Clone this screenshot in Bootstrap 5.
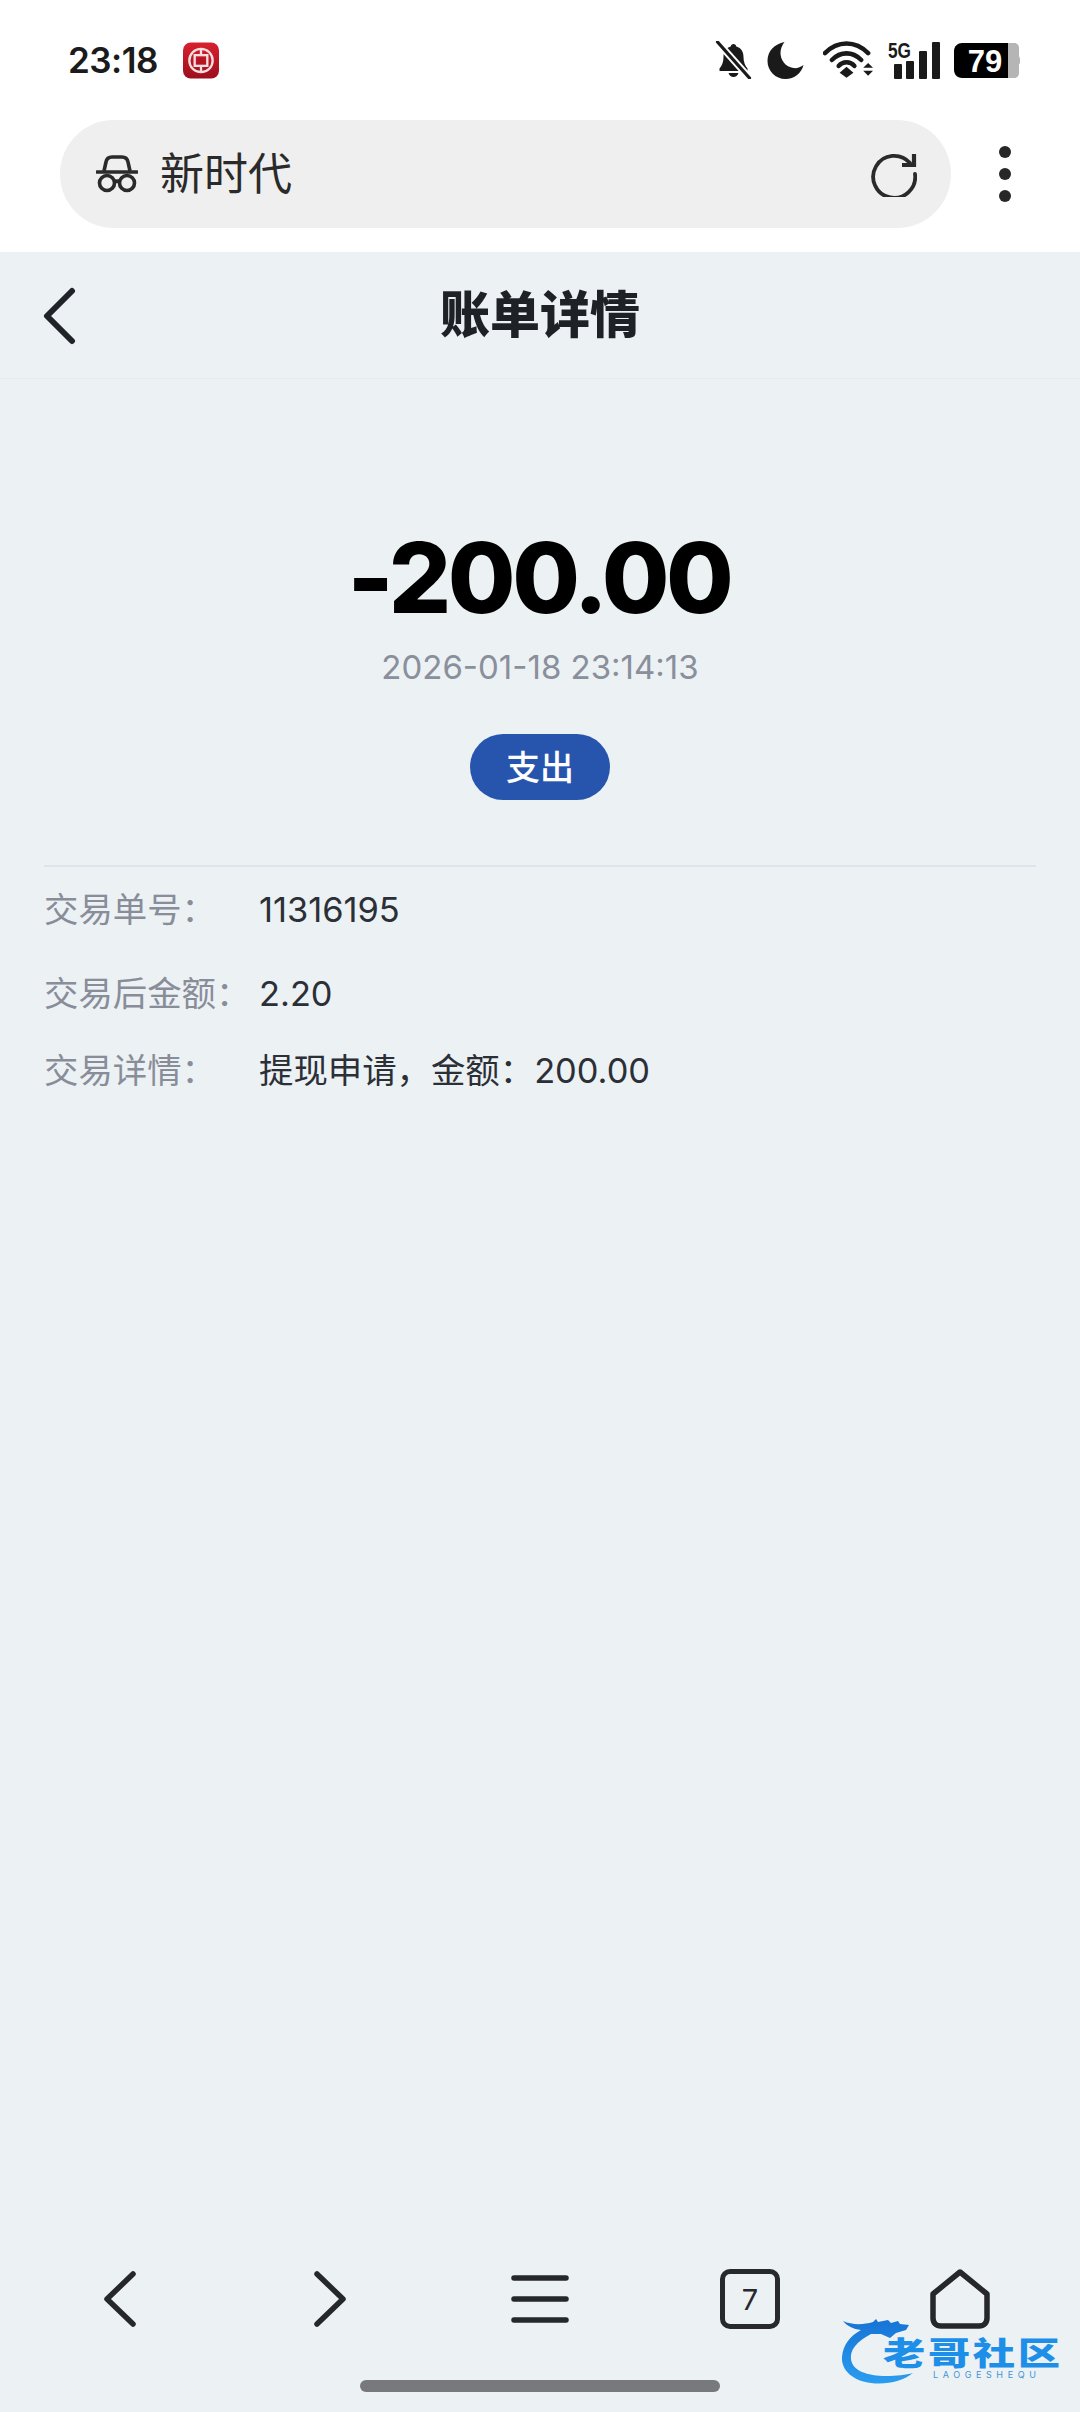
<!DOCTYPE html>
<html lang="zh-CN">
<head>
    <meta charset="UTF-8">
    <meta name="viewport" content="width=device-width, initial-scale=1.0">
    <title>账单详情</title>
    <link rel="stylesheet" href="https://cdn.jsdelivr.net/npm/bootstrap@5.3.0/dist/css/bootstrap.min.css">
    <style>
        body { width: 1080px; height: 2412px; background-color: #ecf1f4; font-family: Inter, "Noto Sans CJK SC", sans-serif; overflow: hidden; }
        .screen { height: 2412px; }
        .top-chrome { background: #fff; height: 252px; }
        .status-row { height: 120px; padding: 0 60px 0 68px; }
        .clock { font-size: 35px; font-weight: 600; color: #1b1b1b; letter-spacing: -0.5px; margin-right: 25px; }
        .status-icons { gap: 14px; }
        .moon-icon { margin-right: 4px; }
        .five-g { overflow: visible; }
        .battery-box { width: 66px; height: 35px; }
        .url-row { height: 108px; padding: 0 0 0 60px; }
        .url-pill { width: 891px; height: 108px; background: #efefef; border-radius: 54px; padding: 0 34px 0 36px; }
        .url-text { font-size: 44px; color: #2a2a2a; margin-left: 22px; line-height: 1; }
        .kebab { gap: 10px; width: 108px; }
        .kebab span { width: 12px; height: 12px; background: #272727; border-radius: 50%; }
        .page-head { height: 127px; border-bottom: 1px solid #e6eaee; }
        .page-title { font-size: 50px; font-weight: 900; color: #1e2227; line-height: 1; }
        .back-btn { left: 40px; top: 35px; }
        .amount-block { padding-top: 150px; }
        .amount { font-size: 98px; font-weight: 800; color: #000; line-height: 1; letter-spacing: -3.4px; margin-right: 2px; }
        .stamp { font-size: 33px; color: #8a8f9c; line-height: 1; margin-top: 24px; }
        .kind-pill { width: 140px; height: 66px; border-radius: 33px; background: #2755ad; color: #fff; font-size: 34px; font-weight: 500; margin-top: 50px; }
        .detail-list { margin: 65px 44px 0; border-top: 2px solid #dfe4ec; padding-top: 22px; }
        .detail-row { font-size: 34.400px; line-height: 42px; color: #2b2f36; }
        .detail-row + .detail-row { margin-top: 42px; }
        .detail-row.tight { margin-top: 35px; }
        .detail-key { width: 215px; color: #888d99; flex: none; }
        .bottom-bar { height: 126px; padding: 0 15px; margin-bottom: 18px; }
        .nav-slot { flex: 1; }
        .tab-count { width: 60px; height: 60px; border: 5px solid #28292c; border-radius: 10px; font-size: 29px; color: #28292c; line-height: 1; }
        .home-handle { width: 360px; height: 12px; background: #77797c; border-radius: 6px; }
        .handle-row { height: 32px; }
        .spacer-fill { flex: 1; }
        .watermark { right: 15px; bottom: 27px; width: 224px; height: 67px; }
        .wm-title { font-size: 32px; font-weight: 900; color: #1e8fe8; line-height: 1; left: 42px; top: 20px; letter-spacing: 2px; transform: scaleX(1.32); transform-origin: left center; }
        .wm-sub { font-size: 9px; color: #3f93d8; left: 92px; top: 52px; letter-spacing: 4.6px; line-height: 1; }
    </style>
</head>
<body>
<div class="screen d-flex flex-column position-relative">
    <div class="top-chrome">
        <div class="status-row d-flex align-items-center">
            <span class="clock">23:18</span>
            <svg width="36" height="37" viewBox="0 0 37 37">
                <defs><linearGradient id="bankRed" x1="0" y1="0" x2="0" y2="1"><stop offset="0" stop-color="#d9202e"/><stop offset="1" stop-color="#9c0f1c"/></linearGradient></defs>
                <rect width="37" height="37" rx="8" fill="url(#bankRed)"/>
                <circle cx="18.5" cy="18.5" r="12" fill="none" stroke="#f6dfe0" stroke-width="2.4"/>
                <rect x="12" y="13" width="13" height="11" fill="none" stroke="#f6dfe0" stroke-width="2.4"/>
                <rect x="15.500" y="16" width="6" height="5" fill="#b51524"/>
                <path d="M18.500 7v6M18.500 24v6" stroke="#f6dfe0" stroke-width="2.4"/>
            </svg>
            <div class="ms-auto d-flex align-items-center status-icons">
                <svg width="37" height="38" viewBox="0 0 36 38">
                    <path d="M18 3c1.500 0 2.600 1 2.800 2.500C26 7 28 11 28 16c0 5 1.500 8.500 4 11.500V30H4v-2.500C6.500 24.500 8 21 8 16c0-5 2-9 7.200-10.500C15.400 4 16.500 3 18 3zM13 32h10c-.8 2.400-2.800 4-5 4s-4.200-1.600-5-4z" fill="#1a1a1a"/>
                    <path d="M2 1l32 36" stroke="#fff" stroke-width="7"/>
                    <path d="M2 1l32 36" stroke="#1a1a1a" stroke-width="3.200" stroke-linecap="round"/>
                </svg>
                <svg class="moon-icon" width="39" height="38" viewBox="0 0 38 38"><path d="M18 1C8 3 1 10 1 20c0 10 8 18 18 18 9 0 16-6 18-14-3 2.500-7 3.500-10 3C19 26 14 19 14 12c0-4 1.500-8 4-11z" fill="#1a1a1a"/></svg>
                <svg width="51" height="38" viewBox="0 0 52 38">
                    <path d="M2 12C15-1 33-1 46 12" fill="none" stroke="#1a1a1a" stroke-width="4.600" stroke-linecap="round"/>
                    <path d="M9 19C18 10 30 10 39 19" fill="none" stroke="#1a1a1a" stroke-width="4.600" stroke-linecap="round"/>
                    <path d="M16 25C20 20 28 20 32 25" fill="none" stroke="#1a1a1a" stroke-width="4.600" stroke-linecap="round"/>
                    <path d="M24 26l7 6-7 5-7-5z" fill="#1a1a1a"/>
                    <path d="M46 22l5 5H41zM41 30h10l-5 5z" fill="#1a1a1a"/>
                </svg>
                <svg class="five-g" width="52" height="38" viewBox="0 0 52 38">
                    <text x="0" y="17" font-family="Liberation Sans, sans-serif" font-size="22" font-weight="700" fill="#1a1a1a" textLength="23" lengthAdjust="spacingAndGlyphs">5G</text>
                    <rect x="6" y="23" width="8" height="15" rx="1" fill="#1a1a1a"/>
                    <rect x="18" y="20" width="8" height="18" rx="1" fill="#1a1a1a"/>
                    <rect x="31" y="10" width="8" height="28" rx="1" fill="#1a1a1a"/>
                    <rect x="44" y="1" width="8" height="37" rx="1" fill="#1a1a1a"/>
                </svg>
                <svg class="battery-box" viewBox="0 0 66 35">
                    <path d="M53 0h7c3 0 5 2 5 5v25c0 3-2 5-5 5h-7z" fill="#b5b5b5"/>
                    <path d="M63 13c2 0 3 1 3 3v3c0 2-1 3-3 3z" fill="#b5b5b5"/>
                    <path d="M8 0h46v35H8c-4 0-8-3-8-8V8c0-5 4-8 8-8z" fill="#000"/>
                    <text x="31" y="29" text-anchor="middle" font-family="Liberation Sans, sans-serif" font-size="31" font-weight="700" fill="#fff">79</text>
                </svg>
            </div>
        </div>
        <div class="url-row d-flex align-items-center">
            <div class="url-pill d-flex align-items-center">
                <svg width="42" height="38" viewBox="0 0 42 38" fill="none" stroke="#2a2a2a" stroke-width="3.600">
                    <path d="M8 16l2-9c.6-3 2.500-5 6-5h10c3.500 0 5.400 2 6 5l2 9"/>
                    <path d="M1 17h40" stroke-linecap="round"/>
                    <circle cx="11" cy="28" r="7.500"/>
                    <circle cx="31" cy="28" r="7.500"/>
                    <path d="M18.500 27c1.500-1 3.500-1 5 0"/>
                </svg>
                <span class="url-text">新时代</span>
                <svg class="ms-auto" width="46" height="46" viewBox="0 0 46 46" fill="none" stroke="#2a2a2a" stroke-width="3.800">
                    <path d="M39 12A21 21 0 1 0 44 23" stroke-linecap="round"/>
                    <path d="M43 3v11H31" stroke-width="4.200"/>
                </svg>
            </div>
            <div class="kebab d-flex flex-column align-items-center"><span></span><span></span><span></span></div>
        </div>
    </div>

    <div class="page-head position-relative d-flex align-items-center justify-content-center">
        <svg class="back-btn position-absolute" width="36" height="58" viewBox="0 0 36 58" fill="none" stroke="#202429" stroke-width="6" stroke-linecap="round" stroke-linejoin="round"><path d="M32 4L7 29l25 25"/></svg>
        <span class="page-title">账单详情</span>
    </div>

    <div class="amount-block d-flex flex-column align-items-center">
        <div class="amount">-200.00</div>
        <div class="stamp">2026-01-18 23:14:13</div>
        <div class="kind-pill d-flex align-items-center justify-content-center">支出</div>
    </div>

    <div class="detail-list">
        <div class="detail-row d-flex"><span class="detail-key">交易单号&#65306;</span><span>11316195</span></div>
        <div class="detail-row d-flex"><span class="detail-key">交易后金额&#65306;</span><span>2.20</span></div>
        <div class="detail-row tight d-flex"><span class="detail-key">交易详情&#65306;</span><span>提现申请&#65292;金额&#65306;200.00</span></div>
    </div>

    <div class="spacer-fill"></div>

    <div class="bottom-bar d-flex align-items-center">
        <div class="nav-slot d-flex justify-content-center">
            <svg width="34" height="58" viewBox="0 0 34 58" fill="none" stroke="#26272a" stroke-width="5.500" stroke-linecap="round" stroke-linejoin="round"><path d="M30 4L4 29l26 25"/></svg>
        </div>
        <div class="nav-slot d-flex justify-content-center">
            <svg width="34" height="58" viewBox="0 0 34 58" fill="none" stroke="#26272a" stroke-width="5.500" stroke-linecap="round" stroke-linejoin="round"><path d="M4 4l26 25L4 54"/></svg>
        </div>
        <div class="nav-slot d-flex justify-content-center">
            <svg width="58" height="50" viewBox="0 0 58 50" fill="none" stroke="#26272a" stroke-width="5.500" stroke-linecap="round"><path d="M3 4h52M3 25h52M3 46h52"/></svg>
        </div>
        <div class="nav-slot d-flex justify-content-center">
            <div class="tab-count d-flex align-items-center justify-content-center">7</div>
        </div>
        <div class="nav-slot d-flex justify-content-center">
            <svg width="60" height="60" viewBox="0 0 60 60" fill="none" stroke="#26272a" stroke-width="5.500" stroke-linejoin="round"><path d="M30 3L3 25v24c0 5 3 8 8 8h38c5 0 8-3 8-8V25z"/></svg>
        </div>
    </div>
    <div class="handle-row d-flex justify-content-center"><div class="home-handle"></div></div>
    <div class="watermark position-absolute">
        <svg class="position-absolute top-0 start-0" width="100" height="67" viewBox="0 0 100 67">
            <defs><linearGradient id="wmBlue" x1="0" y1="0" x2="0" y2="1"><stop offset="0" stop-color="#1673d6"/><stop offset="1" stop-color="#2a9df0"/></linearGradient></defs>
            <path d="M2 3c9 4 20 4 30 1l3-3 2 3 10-2 3 3 7-2 2 3 9 1-3 5-10 3-6 5-9-4-10 0C15 24 9 32 10 41c1 10 12 16 32 17 10 .5 22-1 30-3-10 8-26 12-42 10C12 63 0 52 1 39 2 27 9 18 20 12 12 11 6 8 2 3z" fill="url(#wmBlue)"/>
        </svg>
        <span class="wm-title position-absolute text-nowrap">老哥社区</span>
        <span class="wm-sub position-absolute text-nowrap">LAOGESHEQU</span>
    </div>
</div>
<script src="https://cdn.jsdelivr.net/npm/bootstrap@5.3.0/dist/js/bootstrap.bundle.min.js"></script>
</body>
</html>
